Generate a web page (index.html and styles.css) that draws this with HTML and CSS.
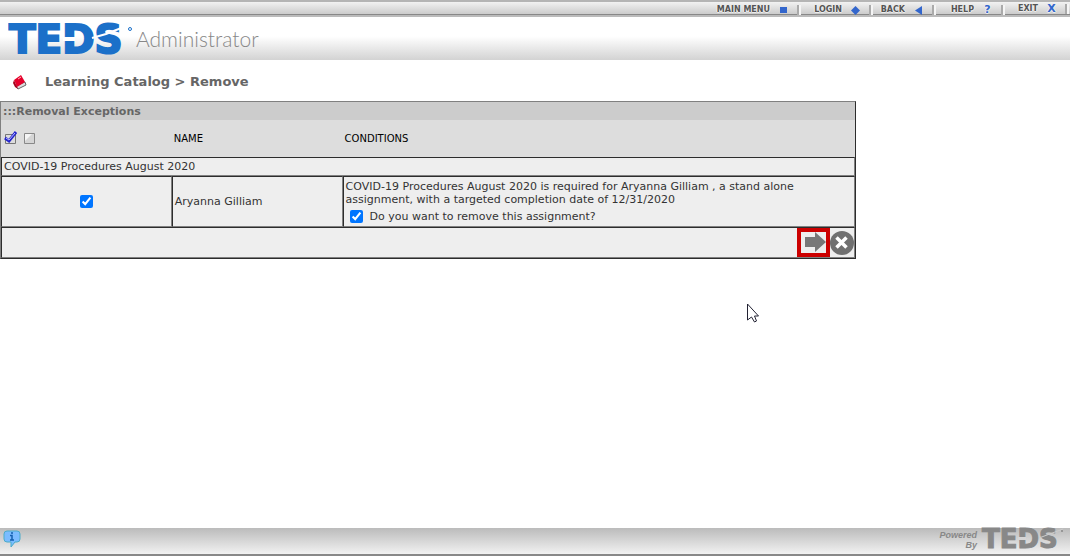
FILE: index.html
```html
<!DOCTYPE html>
<html lang="en">
<head>
<meta charset="utf-8">
<title>TEDS Administrator</title>
<link rel="stylesheet" href="styles.css">
</head>
<body>
<nav class="topbar">
  <a class="navlink" href="#">MAIN MENU<svg width="9" height="9" viewBox="0 0 9 9"><path d="M1 1h7v6H1z" fill="#36c"/></svg></a>
  <a class="navlink login" href="#">LOGIN<svg width="9" height="9" viewBox="0 0 9 9"><path d="M4.500 0L9 4.500 4.500 9 0 4.500z" fill="#36c"/></svg></a>
  <a class="navlink back" href="#">BACK<svg width="9" height="9" viewBox="0 0 9 9"><path d="M8 0v9L1 4.500z" fill="#36c"/></svg></a>
  <a class="navlink help" href="#">HELP<span class="mark">?</span></a>
  <a class="navlink exit" href="#">EXIT<span class="mark">X</span></a>
</nav>
<header class="brand">
  <svg class="logo" width="128" height="47" viewBox="0 0 128 47" role="img" aria-label="TEDS">
    <text class="logo-text" x="1" y="36">TEDS</text>
    <path d="M55 20h12v4H55z" fill="#fff"/>
    <path d="M84 21L98 17 121 8" stroke="#fff" stroke-width="2" fill="none"/>
    <circle cx="122" cy="12" r="1.500" fill="none" stroke="#1b70c9"/>
  </svg>
  <span class="product">Administrator</span>
</header>
<main>
  <div class="title">
    <svg width="16" height="16" viewBox="0 0 16 16"><path d="M4 12l9-4 1 3-8 4z" fill="#ddd" stroke="#666"/><path d="M2 6L9 1l4 7-8 5z" fill="#e5002b"/><path d="M2 6l3 7 1 2-3-2-2-4z" fill="#a5001b"/><path d="M6 5l3-2" stroke="#fbb"/></svg>
    <h1>Learning Catalog &gt; Remove</h1>
  </div>
  <form>
  <table class="grid">
    <colgroup><col class="c1"><col class="c2"><col class="c3"></colgroup>
    <thead>
      <tr class="caption"><th colspan="3">:::Removal Exceptions</th></tr>
      <tr class="heads">
        <th><span class="tools">
          <button type="button" aria-label="Select all"><svg width="14" height="16" viewBox="0 0 14 16"><path d="M1.500 3.500h10v9h-10z" fill="#ddd" stroke="#777"/><path d="M1 7l4 3 7-9" fill="none" stroke="#22c" stroke-width="3"/><path d="M2 7l3 2 6-7" fill="none" stroke="#bbf"/></svg></button>
          <button type="button" aria-label="Clear all"><svg width="14" height="16" viewBox="0 0 14 16"><path d="M2.500 2.500h10v10h-10z" fill="#d5d5d5" stroke="#888"/><path d="M3 3h7l-7 7z" fill="#f5f5f5"/></svg></button>
        </span></th>
        <th>NAME</th><th>CONDITIONS</th>
      </tr>
    </thead>
    <tbody>
      <tr class="group"><td colspan="3">COVID-19 Procedures August 2020</td></tr>
      <tr class="entry">
        <td class="pick"><input type="checkbox" aria-label="Select Aryanna Gilliam" checked></td>
        <td>Aryanna Gilliam</td>
        <td class="cond">COVID-19 Procedures August 2020 is required for Aryanna Gilliam , a stand alone assignment, with a targeted completion date of 12/31/2020
          <label><input type="checkbox" checked>Do you want to remove this assignment?</label></td>
      </tr>
      <tr class="actions"><td colspan="3"><div class="buttons">
        <button class="next" type="submit" aria-label="Continue"><svg width="25" height="21" viewBox="0 0 25 21"><path d="M4 5h10V0l11 10-11 10v-5H4z" fill="#777"/></svg></button>
        <button type="button" aria-label="Cancel"><svg width="24" height="24" viewBox="0 0 24 24"><circle cx="12" cy="12" r="12" fill="#707070"/><path d="M6.500 6.500l10 10M16.500 6.500l-10 10" stroke="#fff" stroke-width="3.500"/></svg></button>
      </div></td></tr>
    </tbody>
  </table>
  </form>
</main>
<svg class="cursor" width="14" height="20" viewBox="0 0 14 20"><path d="M1.500 1v16l4-3 3 5 2-1-2-5h4z" fill="#fff" stroke="#223"/></svg>
<footer>
  <a href="#" aria-label="Information"><svg width="18" height="18" viewBox="0 0 18 18"><path d="M4 1h10q3 0 3 3v5q0 3-3 3h-2l-4 5v-5H4q-3 0-3-3V4q0-3 3-3z" fill="#7bbcff" stroke="#4aabc9"/><path d="M8 3h2M7 5.500h2V10M7 10h4" fill="none" stroke="#1560b0" stroke-width="1.500"/></svg></a>
  <div class="powered"><span class="by">Powered<br>By</span>
  <svg class="mini-logo" width="86" height="34" viewBox="0 0 86 34" role="img" aria-label="TEDS"><text class="mini" x="1" y="26">TEDS</text><path d="M37 15h8v3h-8z" fill="#d5d5d5"/><path d="M58 16l8-3 16-6" fill="none" stroke="#ccc"/><circle cx="81" cy="9" r="1" fill="#888"/></svg></div>
</footer>
</body>
</html>
```
FILE: styles.css
```css
* { box-sizing: border-box; }
body { margin: 0; min-height: 100vh; display: flex; flex-direction: column; background: #fff; color: #333; font: 11px/13px "DejaVu Sans", sans-serif; }
button { border: 0; padding: 0; background: none; display: block; }
svg { display: block; }
.topbar { height: 17px; display: flex; justify-content: flex-end; align-items: flex-end; padding-right: 3px; border-top: 2px solid #b5b5b5; border-bottom: 2px solid #bbb; background: linear-gradient(#f2f2f2, #ccc 12px, #888 12px); }
.navlink { display: flex; align-items: center; justify-content: flex-end; gap: 9px; height: 10px; padding-right: 9px; border-right: 2px solid #aaa; box-shadow: 2px 0 #f5f5f5; color: #555; font: bold 8px/10px "DejaVu Sans", sans-serif; text-decoration: none; text-shadow: 1px 0 #eee, -1px 0 #eee, 0 1px #eee; }
.login { width: 72px; }
.back { width: 63px; }
.help { width: 69px; }
.exit { width: 64px; margin-bottom: 1px; }
.mark { width: 9px; color: #36c; font-size: 11px; text-align: center; }
.brand { height: 43px; display: flex; align-items: flex-start; padding: 0 8px; background: linear-gradient(#fff 45%, #d3d3d3); }
.logo-text { font: bold 39px "DejaVu Sans", sans-serif; fill: #1b70c9; stroke: #1b70c9; stroke-width: 2px; }
.product { color: #888; font: 300 21px/43px Lato, sans-serif; }
main { flex: 1; }
.title { display: flex; align-items: center; gap: 17px; height: 41px; padding: 2px 12px 0; }
h1 { margin: 0; color: #666; font: bold 13px/16px "DejaVu Sans", sans-serif; }
.grid { width: 80%; table-layout: fixed; border-collapse: separate; border-spacing: 0; border: 1px solid; border-color: #808080 #2c2c2c #2c2c2c #808080; }
.c1, .c2 { width: 20%; }
th { text-align: left; font-weight: normal; }
td, th { padding: 0 2px; }
.caption { height: 18px; background: #ccc; color: #666; }
.caption th { font-weight: bold; }
.heads { height: 37px; background: #ddd; color: #000; font-size: 10px; }
.tools { display: flex; gap: 4px; padding-left: 1px; }
td { border: 1px solid; border-color: #2c2c2c #808080 #808080 #2c2c2c; background: #eee; }
.group { height: 19px; }
.entry { height: 51px; }
.pick { text-align: center; }
input { width: 13px; height: 13px; margin: 0; vertical-align: middle; accent-color: #0075ff; }
label { display: flex; align-items: center; gap: 7px; padding: 4px 4px 0; }
.actions td { padding-right: 0; }
.buttons { display: flex; justify-content: flex-end; align-items: center; }
.next { border: 4px solid #c00; }
.cursor { position: absolute; left: 746px; top: 303px; }
footer { height: 28px; display: flex; justify-content: space-between; padding: 0 3px; border-bottom: 2px solid #888; background: linear-gradient(#bbb, #f2f2f2); }
footer a { padding-top: 2px; }
.powered { display: flex; align-items: flex-start; gap: 4px; }
.mini-logo { margin: -6px 0; }
.by { padding-top: 2px; color: #888; font: italic bold 9px/10px "Liberation Sans", sans-serif; text-align: right; }
.mini { font: bold 26px "DejaVu Sans", sans-serif; fill: #888; stroke: #888; }
```
